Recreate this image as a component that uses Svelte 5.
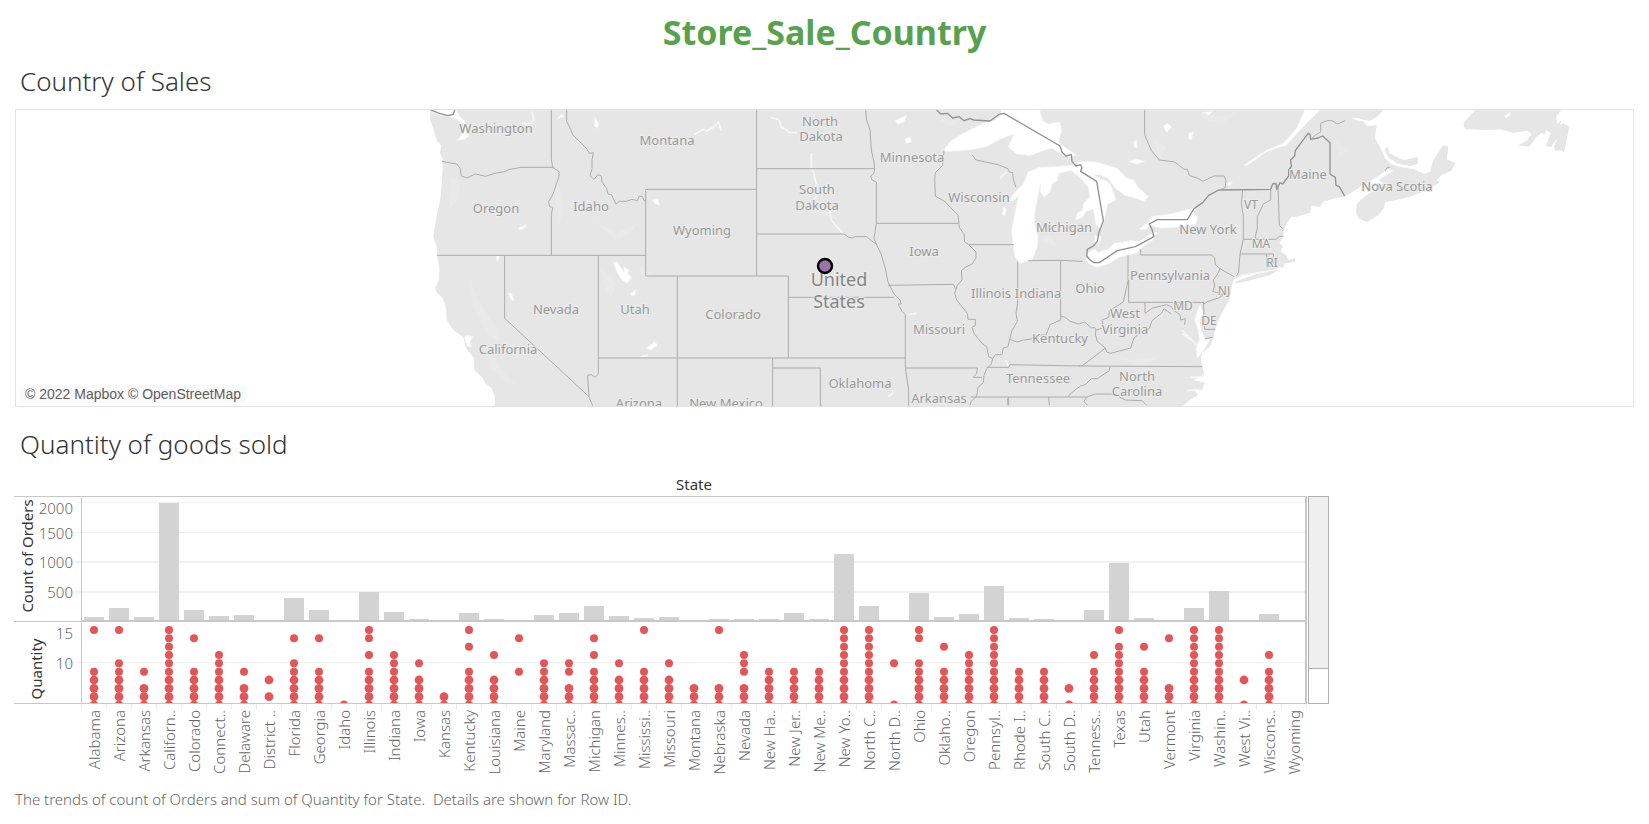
<script>
  const states = [
    ['Alabama', 61, [14, 9, 8, 7, 6, 5]],
    ['Arizona', 224, [14, 10, 9, 8, 7, 6, 5]],
    ['Arkansas', 60, [9, 7, 6, 5]],
    ['Californ..', 2001, [14, 13, 12, 11, 10, 9, 8, 7, 6, 5]],
    ['Colorado', 182, [13, 9, 8, 7, 6, 5]],
    ['Connect..', 82, [11, 10, 9, 8, 7, 6, 5]],
    ['Delaware', 96, [9, 7, 6, 5]],
    ['District ..', 10, [8, 6]],
    ['Florida', 383, [13, 10, 9, 8, 7, 6, 5]],
    ['Georgia', 184, [13, 9, 8, 7, 6, 5]],
    ['Idaho', 21, [5]],
    ['Illinois', 492, [14, 13, 11, 9, 8, 7, 6, 5]],
    ['Indiana', 149, [11, 10, 9, 8, 7, 6, 5]],
    ['Iowa', 30, [10, 8, 7, 6, 5]],
    ['Kansas', 24, [6, 5]],
    ['Kentucky', 139, [14, 12, 9, 8, 7, 6, 5]],
    ['Louisiana', 42, [11, 8, 7, 6, 5]],
    ['Maine', 8, [13, 9]],
    ['Maryland', 105, [10, 9, 8, 7, 6, 5]],
    ['Massac..', 135, [10, 9, 7, 6, 5]],
    ['Michigan', 255, [13, 11, 9, 8, 7, 6, 5]],
    ['Minnes..', 89, [10, 8, 7, 6, 5]],
    ['Mississi..', 53, [14, 9, 8, 7, 6, 5]],
    ['Missouri', 66, [10, 8, 7, 6, 5]],
    ['Montana', 15, [7, 6, 5]],
    ['Nebraska', 38, [14, 7, 6, 5]],
    ['Nevada', 39, [11, 10, 9, 7, 6, 5]],
    ['New Ha..', 27, [9, 8, 7, 6, 5]],
    ['New Jer..', 130, [9, 8, 7, 6, 5]],
    ['New Me..', 37, [9, 8, 7, 6, 5]],
    ['New Yo..', 1128, [14, 13, 12, 11, 10, 9, 8, 7, 6, 5]],
    ['North C..', 249, [14, 13, 12, 11, 10, 9, 8, 7, 6, 5]],
    ['North D..', 7, [10, 5]],
    ['Ohio', 469, [14, 13, 10, 9, 8, 7, 6, 5]],
    ['Oklaho..', 66, [12, 9, 8, 7, 6, 5]],
    ['Oregon', 124, [11, 10, 9, 8, 7, 6, 5]],
    ['Pennsyl..', 587, [14, 13, 12, 11, 10, 9, 8, 7, 6, 5]],
    ['Rhode I..', 56, [9, 8, 7, 6, 5]],
    ['South C..', 42, [9, 8, 7, 6, 5]],
    ['South D..', 12, [7, 5]],
    ['Tenness..', 183, [11, 9, 8, 7, 6, 5]],
    ['Texas', 985, [14, 12, 11, 10, 9, 8, 7, 6, 5]],
    ['Utah', 53, [12, 9, 8, 7, 6, 5]],
    ['Vermont', 11, [13, 7, 6, 5]],
    ['Virginia', 224, [14, 13, 12, 11, 10, 9, 8, 7, 6, 5]],
    ['Washin..', 506, [14, 13, 12, 11, 10, 9, 8, 7, 6, 5]],
    ['West Vi..', 4, [8, 5]],
    ['Wiscons..', 110, [11, 9, 8, 7, 6, 5]],
    ['Wyoming', 1, []]
  ];

  const step = 25;
  const left = 67;
  const right = left + states.length * step;
  const center = (i) => left + 13 + i * step;
  const barTop = (n) => 125 - Math.max(1, Math.round(n * 0.0592));
  const dotY = (q) => 134 + ((14 - q) * 25) / 3;

  const grid = [
    [2000, 6, 1, 18],
    [1500, 36, 1, 43],
    [1000, 65, 2, 72],
    [500, 95, 2, 102]
  ];

  const places = [
    ['Washington', 496, 133], ['Oregon', 496, 213], ['Idaho', 591, 211], ['Montana', 667, 145],
    ['Wyoming', 702, 235], ['Nevada', 556, 314], ['Utah', 635, 314], ['Colorado', 733, 319],
    ['California', 508, 354], ['Arizona', 639, 408], ['New Mexico', 726, 408],
    ['North', 820, 126], ['Dakota', 821, 141], ['South', 817, 194], ['Dakota', 817, 210],
    ['Minnesota', 912, 162], ['Wisconsin', 979, 202], ['Iowa', 924, 256], ['Illinois', 991, 298],
    ['Missouri', 939, 334], ['Oklahoma', 860, 388], ['Arkansas', 939, 403],
    ['Michigan', 1064, 232], ['Ohio', 1090, 293], ['Indiana', 1038, 298], ['Kentucky', 1060, 343],
    ['West', 1125, 318], ['Virginia', 1125, 334], ['Tennessee', 1038, 383],
    ['North', 1137, 381], ['Carolina', 1137, 396], ['Pennsylvania', 1170, 280],
    ['New York', 1208, 234], ['Maine', 1308, 179], ['Nova Scotia', 1397, 191]
  ];
  const abbreviations = [
    ['VT', 1251, 209], ['MA', 1261, 248], ['RI', 1272, 267],
    ['NJ', 1224, 295], ['MD', 1183, 310], ['DE', 1209, 325]
  ];
</script>

<main>
  <h1>Store_Sale_Country</h1>

  <section>
    <h2>Country of Sales</h2>
    <div class="map">
      <svg viewBox="16 110 1617 296" preserveAspectRatio="xMidYMid slice" role="img" aria-label="Map of the United States">
        <g transform="translate(420 100) scale(.33333)">
          <path class="land" d="M32 25L30 60 40 85 50 120 64 138 60 160 67 175 68 210 62 290 48 360 40 410 50 440 52 470 58 500 57 540 46 562 50 578 66 592 78 620 80 660 100 690 130 712 138 745 162 775 163 810 185 830 198 852 215 865 224 890 225 925H980V25Z" />
          <g class="relief">
            <path d="M95 230L120 250 115 300 85 330ZM150 540L185 620 230 680 240 730 200 700 160 620ZM540 500L560 580 575 590 590 550ZM520 360L590 400 650 370 640 390 590 425ZM200 740L260 830 290 850 260 850 210 800ZM660 500L700 520 660 520ZM410 230L430 330 420 370 405 300Z" />
          </g>
          <g class="water">
            <path d="M32 28H106L122 52 134 62 130 72 112 58 85 48 55 45 36 36ZM128 58L145 78 138 92 148 108 132 118 112 122 122 108 130 96ZM132 712L142 706 160 710 150 724 154 742 142 738ZM580 488L592 485 600 500 612 515 612 500 628 512 622 520 634 532 622 550 606 540 592 518ZM296 384L318 374 316 382 300 390ZM228 468H238L232 486ZM264 580H274L283 600 276 602ZM410 60L424 42 434 50 422 52ZM524 50L536 70 532 86 524 78ZM632 580L648 568 646 584 634 588ZM680 745L705 724 712 736 692 750ZM698 300L714 298 718 316 704 310Z" />
            <path class="stream" d="M822 104L850 88 858 94 880 82 895 66 904 92M336 34L342 60 330 72 306 70M662 770L684 766" />
          </g>
          <path class="border" d="M32 30L58 40 84 47 100 43 104 30" />
          <path class="state" d="M394 30V178L398 202 418 216 416 232 402 274 396 288 386 304 388 318 398 324 394 345V466M66 184L92 189 110 192 120 204 124 228 140 234 166 222 196 229 232 218 250 216 270 208 304 202H400M440 30V64L454 92 458 104 500 146 508 160 520 158 516 180 516 206 510 228 522 238 534 224 544 228 546 246 560 266 564 282 574 284 588 312 598 304 618 304 636 298 652 302 658 288 668 290 672 302 678 302M960 268H677V528H960M50 466H677M254 466V655L507 890 518 918M535 466V822L526 832 514 824 503 826 507 890M772 530V918M535 774H960" />
        </g>

        <g transform="translate(980 100) scale(.33333)">
          <path class="land" d="M-750 25H1215L1192 50 1170 62 1150 60 1130 53 1115 57 1150 64 1162 78 1190 76 1185 115 1205 150 1215 175 1235 193 1265 202 1300 207 1335 222 1350 215 1360 180 1390 135 1405 140 1400 178 1425 188 1415 212 1385 225 1370 240 1378 248 1330 275 1290 290 1240 302 1215 307 1212 325 1192 348 1160 367 1135 355 1128 340 1130 312 1155 288 1190 268 1210 250 1195 240 1215 228 1240 212 1224 208 1190 232 1145 258 1095 290 1065 295 1030 305 1020 320 995 318 990 338 950 350 935 350 920 370 910 395 912 410 898 428 908 438 902 455 918 465 925 480 945 474 945 486 915 490 908 504 895 498 890 508 860 512 790 526 762 538 755 560 748 600 735 622 718 655 705 690 700 715 690 740 666 758 662 775 668 800 672 825 640 840 675 848 665 870 640 868 655 885 630 900 600 925H-750Z" />
          <path class="land" d="M1214 150L1222 138 1228 160 1270 180 1300 174 1315 172 1312 192 1290 198 1250 190 1225 172ZM1450 70L1490 25H1748L1728 50 1732 72 1744 60 1740 76 1750 70 1768 80 1762 110 1752 157 1742 150 1725 152 1722 138 1735 112 1712 142 1698 138 1712 100 1700 90 1692 104 1686 98 1670 110 1648 140 1615 136 1640 122 1655 102 1642 92 1600 98 1560 88 1520 90 1455 88ZM764 545L830 522 898 508 870 526 812 541 772 550Z" />
          <g class="relief">
            <path d="M-560 300L-480 320 -420 360 -500 340ZM-120 60L-60 60 -90 80ZM650 40L720 50 770 36 730 70 680 62ZM520 120L560 140 540 180ZM380 760L460 780 540 770 480 800ZM1060 120L1110 150 1080 170ZM230 440L180 420 210 400Z" />
          </g>
          <g class="water">
            <path d="M-112 155L-90 125 -60 105 -20 85 20 65 44 60 66 42 62 25H178L188 62 205 72 238 66 246 90 235 125 258 145 290 165 270 172 240 160 215 145 190 152 150 167 110 162 85 140 102 102 60 118 20 140 -30 150Z" />
            <path d="M120 490L105 470 98 430 95 390 104 340 116 288 94 305 86 302 106 275 130 252 145 215 180 202 225 200 275 196 290 208 262 214 236 220 232 242 216 252 210 275 192 292 180 275 182 250 165 330 163 370 174 400 172 440 158 478Z" />
            <path d="M268 198L300 184 350 186 410 204 440 234 462 240 472 260 506 290 492 304 458 292 434 286 406 265 385 236 358 224 340 224 390 250 408 300 382 314 372 365 362 388 348 376 340 328 318 334 308 352 286 360 292 340 308 330 310 312 330 290 325 262 300 232 278 216Z" />
            <path d="M318 478L326 456 344 446 352 458 385 446 402 430 450 422 480 424 516 400 530 396 522 418 486 442 470 460 420 470 390 490 350 502 326 490ZM345 406L364 410 358 428 344 430ZM478 386L505 366 515 350 570 342 618 330 650 320 640 342 654 350 648 372 608 382 540 384 514 376 492 390Z" />
            <path d="M976 25H1025L960 90 920 135 860 155 800 197 792 195 860 150 910 130 950 85ZM740 250L758 245 748 258ZM550 78L562 70 575 80 560 98ZM625 100L640 96 634 120 626 116ZM445 185L470 178 495 184 470 192ZM460 128L470 120 472 144 464 142ZM665 38L698 34 688 44ZM72 320L78 328 74 348 66 344ZM-255 62L-220 46 -228 66 -246 72ZM-224 116L-210 112 -206 126 -222 130ZM1576 46L1592 36 1588 48 1576 54Z" />
            <path d="M660 616L650 640 644 660 655 690 658 720 648 745 652 775 662 762 674 745 690 720 672 712 664 690 658 660 672 640Z" />
            <path class="stream" d="M-628 52L-605 58 -595 82 -580 90 -572 98 -548 98M-506 160V200L-498 222 -492 250 -490 290 -500 300M-452 330L-446 360 -430 380 -412 398M-214 644L-190 640M-275 890L-262 880 -262 870M606 690L650 735M606 700L640 725M77 780L85 798M782 527L860 514M630 832L672 830M620 872L650 870M80 215L60 235" />
          </g>
          <g class="border">
            <path d="M-130 30L-118 42 -98 40 -82 54 -62 50 -48 62 -30 56 -18 60 30 63 56 44 72 40 240 138 246 156 258 168 274 164 276 184 288 198 302 194 306 204 302 214 350 244 370 362 356 400 352 424 340 438 322 448 320 468 330 480 342 488H358L412 452 466 440 522 410 516 388 508 372 532 359H622L642 326 668 308 686 286 716 270 872 268 878 252 888 250 890 268 900 248 908 252 926 228 926 210 934 200 932 180 944 168 946 152 984 100 990 104 992 118 1014 114 1028 108 1050 128V222L1066 232 1068 256 1078 260 1094 288" />
          </g>
          <g class="state">
            <path d="M-670 30V528M-750 268H-670M-750 528H-575V774M-670 206H-316M-343 30L-340 60 -330 90 -326 150 -318 186 -316 206 -318 220 -328 228 -324 240 -311 246V370M-670 402H-408L-394 412 -382 414 -376 410 -340 410 -326 422 -311 432 -318 416 -311 370M-311 370H-64M-311 432L-296 464 -284 506 -276 546 -258 582 -240 600 -236 612 -246 612 -234 634 -224 644V804M-575 592H-258M-276 556L-80 553 -72 568M-750 774H-224M-622 774V918M-622 804H-479V916H-474M-224 804L-214 870V918M-224 804H-8L-10 820 -20 832H6M-108 152L-112 196 -134 218 -136 236 -134 288 -104 306 -66 346 -62 382 -48 402 -46 426 -34 434 -12 456 -12 474 -24 492 -44 502 -56 512 -54 540 -68 556 -76 580 -70 600 -38 640 -36 658 -14 658 -14 676 -24 682 -18 700 6 730 20 740 26 770 38 776 34 792 20 806 12 826 10 848 -6 862 -10 888 -26 904 -30 916M-24 164L-12 180 54 194 84 206 88 216 98 218 100 238 108 262M-34 434H102M113 485V610L108 640 112 664 96 692 88 722 84 740 70 744 66 764 46 764 38 776M145 482L242 481 308 484M242 481V660M242 648L256 652 270 664 296 672 314 666 334 684 344 682 348 690 370 684 366 660 386 652 388 632 430 606 440 560 444 542V466M446 540V607H670M482 448V465H694L704 474 706 494 720 506 762 530M720 506L714 520 700 540 704 560 698 574 730 584 716 594 684 604 672 612 670 607 674 688H706M674 716L698 712M495 607V640L518 624 544 618 560 614 574 620 582 632 600 644 602 660 616 656 614 674M348 690L346 702 352 724 376 744 380 756 392 760 452 744 462 714 474 704 474 688 508 686 516 662 544 640 552 626 574 642M242 660L210 674 198 706 180 704 162 716 130 720 112 726 88 718M376 744L330 780 308 796 296 798M20 802H86L90 794 296 798 666 800M390 800L388 812 352 836 334 836 316 854 302 858 290 866 268 884 266 891M0 891H320L346 882 400 882 436 900 486 902 500 916M320 891L312 904 322 916M86 891V916M206 891L208 916M-28 891H0M82 895L84 916M494 30V104L514 152 538 180 584 186 612 208 622 208 628 226 656 236 668 244 702 228 732 228 738 240 736 262 720 270M788 270L784 310 790 350 790 418 780 462 776 516 770 528M790 418H888L898 409H908M780 462H860V500L872 500M860 462H880L882 492M872 268L872 300 850 312 832 350 832 384 824 418M894 252L898 376 908 386M992 118L1008 104 1022 96V70L1040 62 1056 62 1072 72 1096 62M1216 212L1222 202 1230 202" />
          </g>
        </g>

        <g class="places">
          {#each places as [name, x, y]}
            <text {x} {y}>{name}</text>
          {/each}
        </g>
        <g class="places short">
          {#each abbreviations as [name, x, y]}
            <text {x} {y}>{name}</text>
          {/each}
        </g>
        <g class="places nation">
          <text x="839" y="286">United</text>
          <text x="839" y="308">States</text>
        </g>
        <circle cx="825" cy="266" r="7" fill="#9b74a6" stroke="#000" stroke-width="2.4" />
      </svg>
      <p class="credit">© 2022 Mapbox © OpenStreetMap</p>
    </div>
  </section>

  <section>
    <h2 class="second">Quantity of goods sold</h2>
    <div class="sheet">
      <svg class="chart" width="1293" height="306" role="img" aria-label="Count of Orders and Quantity by State">
        <defs>
          <clipPath id="dots"><rect x="67" y="126" width="1226" height="81" /></clipPath>
        </defs>
        <text class="head" x="680" y="-6" text-anchor="middle">State</text>
        {#each grid as [value, y, thick, labelY]}
          <rect x="61" {y} width="1231" height={thick} fill="#f1f1f1" />
          <text class="tick" x="59" y={labelY} text-anchor="end">{value}</text>
        {/each}
        <rect x="61" y="166" width="1231" height="1" fill="#f1f1f1" />
        <text class="tick" x="59" y="143" text-anchor="end">15</text>
        <text class="tick" x="59" y="173" text-anchor="end">10</text>

        {#each states as [name, orders], i}
          <rect x={center(i) - 10} y={barTop(orders)} width="20" height={125 - barTop(orders)} fill="#d3d3d3" />
          <text class="tick" transform="rotate(-90)" x="-214" y={center(i) + 6} text-anchor="end">{name}</text>
          <rect x={left + i * step} y="208" width="1" height="6" fill="#ececec" />
        {/each}
        <rect x={right} y="208" width="1" height="6" fill="#ececec" />

        <g clip-path="url(#dots)" fill="#e15759">
          {#each states as [, , quantities], i}
            {#each quantities as q}
              <circle cx={center(i)} cy={dotY(q)} r={q < 9 ? 4.4 : 4} />
            {/each}
          {/each}
        </g>

        <g fill="#c8c8c8">
          <rect x="0" y="0" width="1293" height="1" />
          <rect x="0" y="125" width="67" height="1" />
          <rect x="67" y="124" width="1226" height="2" />
          <rect x="0" y="207" width="1293" height="1" />
          <rect x="67" y="0" width="1" height="208" />
          <rect x="1291" y="0" width="2" height="208" />
        </g>
        <text class="head" transform="rotate(-90)" x="-60" y="19" text-anchor="middle">Count of Orders</text>
        <text class="head" transform="rotate(-90)" x="-173" y="28" text-anchor="middle">Quantity</text>
      </svg>
      <div class="scroll"><div class="thumb"></div></div>
    </div>
    <p class="caption">The trends of count of Orders and sum of Quantity for State.&nbsp; Details are shown for Row ID.</p>
  </section>
</main>

<style>
  :global(body) {
    margin: 0;
    background: #fff;
  }
  main {
    padding: 0 15px;
    font-family: "Noto Sans", "Open Sans", sans-serif;
    color: #333;
  }
  h1 {
    margin: 0;
    padding-top: 8px;
    font-size: 34px;
    line-height: 48px;
    font-weight: 700;
    text-align: center;
    color: #59a14f;
  }
  h2 {
    margin: 0;
    padding: 9px 5px 12px;
    font-size: 26px;
    line-height: 32px;
    font-weight: 300;
  }
  .second {
    padding: 21px 5px 36px;
  }
  .map {
    position: relative;
    height: 296px;
    border: 1px solid #e3e3e3;
    overflow: hidden;
  }
  .map svg {
    display: block;
    width: 100%;
    height: 100%;
  }
  .land {
    fill: #e6e6e6;
  }
  .relief {
    fill: #e9e9e9;
  }
  .water {
    fill: #fff;
    stroke: #f3f3f3;
    stroke-width: 2;
  }
  .water .stream {
    fill: none;
    stroke: #f6f6f6;
    stroke-width: 5;
  }
  .state,
  .border {
    fill: none;
    stroke: #acacac;
    stroke-width: 3;
    stroke-linejoin: round;
  }
  .border {
    stroke: #919191;
    stroke-width: 4;
  }
  .places {
    font-size: 13px;
    text-anchor: middle;
    fill: #999;
    stroke: #ebebeb;
    stroke-width: 2px;
    paint-order: stroke;
  }
  .short {
    font-size: 12px;
  }
  .nation {
    font-size: 18px;
    fill: #858585;
  }
  .credit {
    position: absolute;
    left: 4px;
    bottom: 3px;
    margin: 0;
    padding: 0 5px;
    background: #fafafa;
    font: 14px/18px "Liberation Sans", Arial, sans-serif;
    color: #5e5e5e;
  }
  .sheet {
    display: flex;
    gap: 1px;
    margin-left: -1px;
  }
  .chart {
    display: block;
    flex: none;
    overflow: visible;
  }
  .head {
    font-size: 15px;
    fill: #333;
  }
  .tick {
    font-size: 15px;
    font-weight: 300;
    fill: #666;
  }
  .scroll {
    box-sizing: border-box;
    flex: none;
    width: 21px;
    height: 208px;
    border: 1px solid #b0b0b0;
  }
  .thumb {
    height: 171px;
    border-bottom: 1px solid #b0b0b0;
    background: #efefef;
  }
  .caption {
    margin: -13px 0 0;
    font-size: 15px;
    line-height: 20px;
    font-weight: 300;
    color: #666;
  }
</style>
